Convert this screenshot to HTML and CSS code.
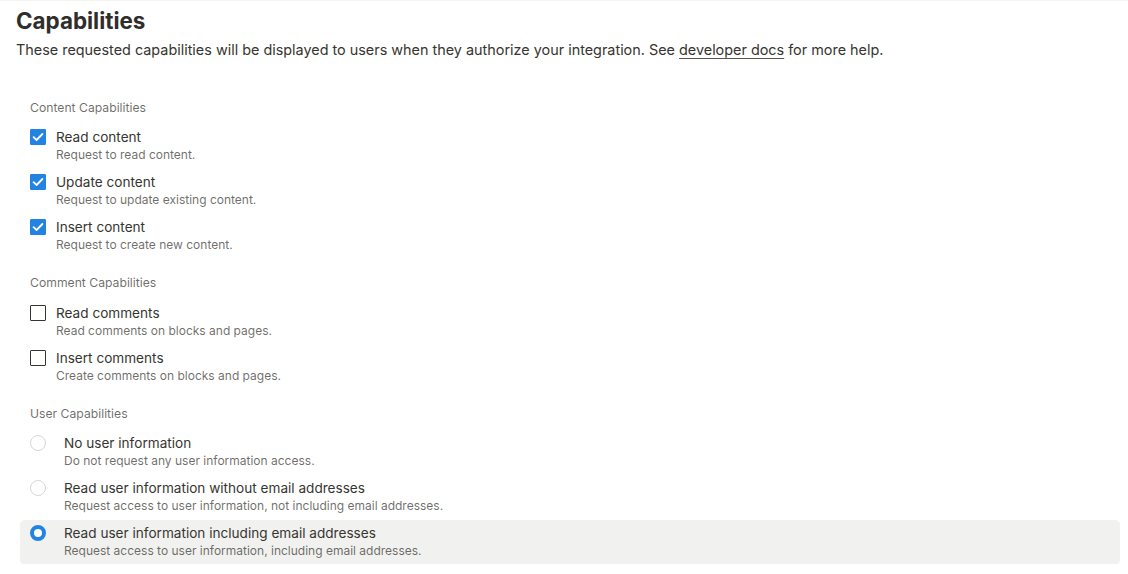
FILE: index.html
```html
<!DOCTYPE html>
<html>
<head>
<meta charset="utf-8">
<link rel="stylesheet" href="styles.css">
</head>
<body>
<div class="page">
  <h1 class="title">Capabilities</h1>
  <p class="intro">These requested capabilities will be displayed to users when they authorize your integration. See <a class="link" href="#">developer docs</a> for more help.</p>

  <section class="group group-content">
    <div class="group-label">Content Capabilities</div>
    <div class="check-row">
      <span class="box checked"><svg viewBox="0 0 16 16" width="16" height="16"><path d="M3.6 8.2 L6.6 11 L12.4 5" fill="none" stroke="#fff" stroke-width="1.8" stroke-linecap="round" stroke-linejoin="round"/></svg></span>
      <div class="texts"><div class="name">Read content</div><div class="desc">Request to read content.</div></div>
    </div>
    <div class="check-row">
      <span class="box checked"><svg viewBox="0 0 16 16" width="16" height="16"><path d="M3.6 8.2 L6.6 11 L12.4 5" fill="none" stroke="#fff" stroke-width="1.8" stroke-linecap="round" stroke-linejoin="round"/></svg></span>
      <div class="texts"><div class="name">Update content</div><div class="desc">Request to update existing content.</div></div>
    </div>
    <div class="check-row">
      <span class="box checked"><svg viewBox="0 0 16 16" width="16" height="16"><path d="M3.6 8.2 L6.6 11 L12.4 5" fill="none" stroke="#fff" stroke-width="1.8" stroke-linecap="round" stroke-linejoin="round"/></svg></span>
      <div class="texts"><div class="name">Insert content</div><div class="desc">Request to create new content.</div></div>
    </div>
  </section>

  <section class="group group-comment">
    <div class="group-label">Comment Capabilities</div>
    <div class="check-row">
      <span class="box"></span>
      <div class="texts"><div class="name">Read comments</div><div class="desc">Read comments on blocks and pages.</div></div>
    </div>
    <div class="check-row">
      <span class="box"></span>
      <div class="texts"><div class="name">Insert comments</div><div class="desc">Create comments on blocks and pages.</div></div>
    </div>
  </section>

  <section class="group group-user">
    <div class="group-label">User Capabilities</div>
    <div class="radio-row">
      <span class="radio"></span>
      <div class="texts"><div class="name">No user information</div><div class="desc">Do not request any user information access.</div></div>
    </div>
    <div class="radio-row">
      <span class="radio"></span>
      <div class="texts"><div class="name">Read user information without email addresses</div><div class="desc">Request access to user information, not including email addresses.</div></div>
    </div>
    <div class="radio-row selected">
      <span class="radio on"></span>
      <div class="texts"><div class="name">Read user information including email addresses</div><div class="desc">Request access to user information, including email addresses.</div></div>
    </div>
  </section>
</div>
</body>
</html>
```

FILE: styles.css
```css
* { box-sizing: border-box; }
html, body { margin: 0; padding: 0; background: #fff; }
body {
  font-family: Inter, "Liberation Sans", Arial, sans-serif;
  color: #37352f;
  border-top: 1px solid #f4f4f3;
}
.page { padding: 0 8px 0 16px; }
.title {
  margin: 0;
  padding-top: 4px;
  font-size: 22.4px;
  line-height: 32px;
  font-weight: 700;
  color: #2f2e2b;
}
.intro {
  margin: 0;
  font-size: 14.4px;
  line-height: 26px;
  color: #37352f;
}
.link { color: inherit; text-decoration: underline; text-underline-offset: 3px; text-decoration-color: #555; }
.group { padding-left: 14px; }
.group-label {
  font-size: 12.2px;
  line-height: 16px;
  margin-bottom: 12px;
  color: rgba(55,53,47,0.72);
}
.group-content { margin-top: 37px; }
.group-comment { margin-top: 12px; }
.group-comment .group-label { margin-bottom: 13px; }
.group-user { margin-top: 12px; }

.check-row { display: flex; align-items: flex-start; gap: 10px; height: 45px; }
.box {
  flex: none;
  width: 16px; height: 16px;
  margin-top: 1px;
  border: 1.5px solid #37352f;
  border-radius: 1px;
  display: flex; align-items: center; justify-content: center;
}
.box.checked { background: #2383e2; border-color: #2383e2; }
.box svg { display: block; flex: none; }
.texts { display: flex; flex-direction: column; }
.name { font-size: 13.6px; line-height: 18px; color: #37352f; }
.desc { font-size: 12px; line-height: 16px; margin-top: 1px; color: rgba(55,53,47,0.72); }

.radio-row {
  display: flex; align-items: flex-start; gap: 18px;
  height: 45px;
  margin-left: -10px;
  padding: 0 10px;
  border-radius: 5px;
}
.radio-row.selected {
  background: #f1f1f0;
  padding-top: 4px;
  margin-top: -4px;
  height: 44px;
  box-shadow: 0 1px 1px rgba(15,15,15,0.05);
}
.radio {
  flex: none;
  width: 16px; height: 16px;
  margin-top: 1px;
  border-radius: 50%;
  border: 1px solid #d6d6d4;
  background: #fff;
}
.radio.on { border: 4.5px solid #2383e2; background: #fff; }
```
